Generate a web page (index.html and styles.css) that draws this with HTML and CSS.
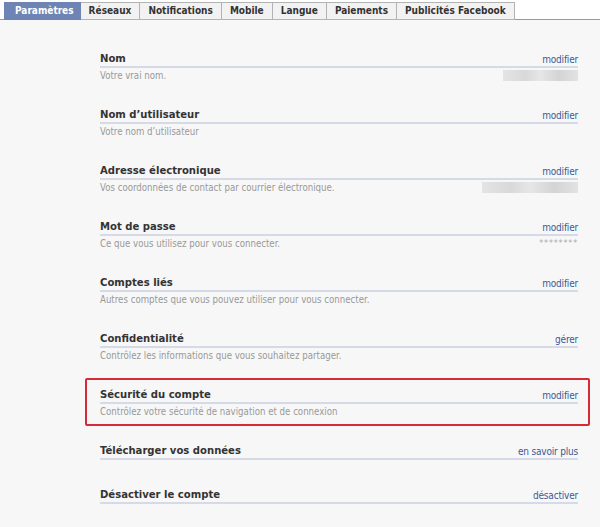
FILE: index.html
```html
<!DOCTYPE html>
<html lang="fr">
<head>
<meta charset="utf-8">
<link rel="stylesheet" href="styles.css">
</head>
<body>
<div class="tabs">
  <span class="tab active">Paramètres</span>
  <span class="tab">Réseaux</span>
  <span class="tab">Notifications</span>
  <span class="tab">Mobile</span>
  <span class="tab">Langue</span>
  <span class="tab">Paiements</span>
  <span class="tab">Publicités Facebook</span>
</div>
<div class="settings">
  <div class="row">
    <div class="head"><span class="title">Nom</span><a class="link">modifier</a></div>
    <div class="sub"><span class="desc">Votre vrai nom.</span><span class="blur w75"></span></div>
  </div>
  <div class="row">
    <div class="head"><span class="title">Nom d’utilisateur</span><a class="link">modifier</a></div>
    <div class="sub"><span class="desc">Votre nom d’utilisateur</span></div>
  </div>
  <div class="row">
    <div class="head"><span class="title">Adresse électronique</span><a class="link">modifier</a></div>
    <div class="sub"><span class="desc">Vos coordonnées de contact par courrier électronique.</span><span class="blur w96"></span></div>
  </div>
  <div class="row">
    <div class="head"><span class="title">Mot de passe</span><a class="link">modifier</a></div>
    <div class="sub"><span class="desc">Ce que vous utilisez pour vous connecter.</span><span class="stars">********</span></div>
  </div>
  <div class="row">
    <div class="head"><span class="title">Comptes liés</span><a class="link">modifier</a></div>
    <div class="sub"><span class="desc">Autres comptes que vous pouvez utiliser pour vous connecter.</span></div>
  </div>
  <div class="row">
    <div class="head"><span class="title">Confidentialité</span><a class="link">gérer</a></div>
    <div class="sub"><span class="desc">Contrôlez les informations que vous souhaitez partager.</span></div>
  </div>
  <div class="row highlight">
    <div class="head"><span class="title">Sécurité du compte</span><a class="link">modifier</a></div>
    <div class="sub"><span class="desc">Contrôlez votre sécurité de navigation et de connexion</span></div>
  </div>
  <div class="row short">
    <div class="head"><span class="title">Télécharger vos données</span><a class="link">en savoir plus</a></div>
  </div>
  <div class="row short">
    <div class="head"><span class="title">Désactiver le compte</span><a class="link">désactiver</a></div>
  </div>
</div>
</body>
</html>
```
FILE: styles.css
```css
html, body {
  margin: 0;
  padding: 0;
  background: #f7f7f7;
  font-family: "DejaVu Sans Condensed", "DejaVu Sans", sans-serif;
}
.tabs {
  display: flex;
  background: #ffffff;
  padding: 2px 0 0 4px;
  border-bottom: 1px solid #9a9a9a;
  height: 17px;
}
.tab {
  box-sizing: border-box;
  height: 18px;
  margin-bottom: -1px;
  padding: 0 8px;
  font-size: 10px;
  font-weight: bold;
  line-height: 16px;
  color: #333;
  background: #f2f2f2;
  border: 1px solid #b3b3b3;
  border-left: none;
}
.tab.active {
  background: #6d84b4;
  color: #fff;
  border-color: #6d84b4;
  padding: 0 6px 0 11px;
}
.settings {
  padding: 30px 22px 0 100px;
}
.row {
  height: 56px;
  box-sizing: border-box;
}
.row.short {
  height: 44px;
}
.head {
  display: flex;
  justify-content: space-between;
  align-items: flex-end;
  border-bottom: 2px solid #d5dae6;
  height: 15px;
  padding-bottom: 1px;
}
.title {
  font-size: 11.2px;
  font-weight: bold;
  color: #333;
}
.link {
  font-size: 10px;
  letter-spacing: -0.2px;
  color: #3b5998;
  cursor: pointer;
}
.sub {
  display: flex;
  justify-content: space-between;
  align-items: center;
  height: 14px;
  margin-top: 0;
}
.desc {
  font-size: 9.6px;
  color: #999;
}
.blur {
  display: block;
  height: 11px;
  background: linear-gradient(90deg, #e4e4e4, #d9d9d9 30%, #e6e6e6 50%, #d4d4d4 75%, #e2e2e2);
}
.w75 { width: 75px; }
.w96 { width: 96px; }
.stars {
  font-size: 9px;
  color: #aaa;
  letter-spacing: 0.8px;
}
.row.highlight {
  margin: -8px -12px 16px -15px;
  padding: 6px 10px 0 13px;
  height: 48px;
  border: 2px solid #d62b36;
  border-radius: 2px;
}
```
